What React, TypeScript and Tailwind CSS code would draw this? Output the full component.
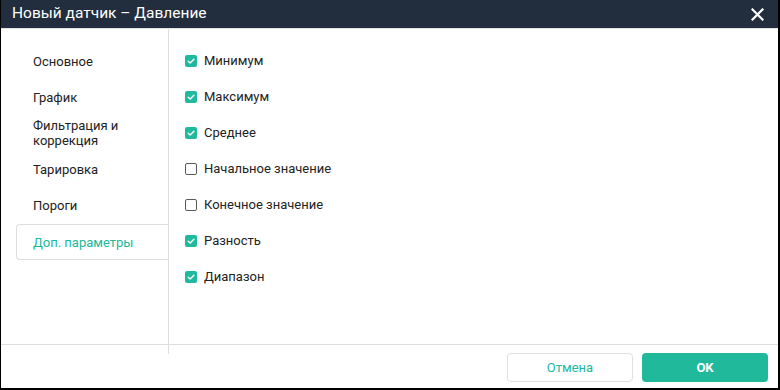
const navItems = ['Основное', 'График', 'Фильтрация и\nкоррекция', 'Тарировка', 'Пороги', 'Доп. параметры']

const options = [
  { label: 'Минимум', checked: true },
  { label: 'Максимум', checked: true },
  { label: 'Среднее', checked: true },
  { label: 'Начальное значение', checked: false },
  { label: 'Конечное значение', checked: false },
  { label: 'Разность', checked: true },
  { label: 'Диапазон', checked: true },
]

function Checkbox({ checked }: { checked: boolean }) {
  if (!checked) {
    return <span className="w-[12px] h-[12px] rounded-[2px] border border-[#5a5a5a] bg-white shrink-0" />
  }
  return (
    <span className="w-[12px] h-[12px] rounded-[2px] bg-[#20b99b] shrink-0 flex items-center justify-center">
      <svg width="10" height="10" viewBox="0 0 10 10" fill="none">
        <path d="M2.2 5.2L4.2 7.1L7.9 3.2" stroke="#fff" strokeWidth="1.4" strokeLinecap="round" strokeLinejoin="round" />
      </svg>
    </span>
  )
}

export default function App() {
  return (
    <div
      className="w-[780px] h-[390px] bg-white border-l border-r-2 border-b-2 border-black flex flex-col text-[#222]"
      style={{ fontFamily: 'Roboto, "Liberation Sans", sans-serif' }}
    >
      {/* Title bar */}
      <div className="h-[29px] bg-[#222e3e] border-b border-[#e3e3e3] flex items-center justify-between pl-[11px] pr-[14px] shrink-0">
        <span className="text-white text-[15.5px] leading-none">Новый датчик – Давление</span>
        <svg width="13" height="13" viewBox="0 0 13 13">
          <path d="M1.5 1.5L11.5 11.5M11.5 1.5L1.5 11.5" stroke="#fff" strokeWidth="2.2" strokeLinecap="square" />
        </svg>
      </div>

      {/* Body */}
      <div className="flex h-[325px] shrink-0">
        <div className="w-[168px] border-r border-[#dedede] flex flex-col shrink-0">
          <div className="flex-1 pt-[14px] pl-[15px]">
            {navItems.map((item, i) => {
              const active = i === navItems.length - 1
              return (
                <div
                  key={item}
                  className={`h-[36px] flex items-center pl-[16px] text-[13px] leading-[15px] whitespace-pre-line ${
                    active ? 'border border-r-0 border-[#dedede] rounded-l-[4px] text-[#20b99b] mt-[1px] h-[35px]' : 'border border-transparent'
                  }`}
                >
                  {item}
                </div>
              )
            })}
          </div>
          <div className="h-[10px] border-t border-[#dedede]" />
        </div>
        <div className="flex-1 flex flex-col">
          <div className="flex-1 pt-[14px] pl-[16px]">
            {options.map((o) => (
              <div key={o.label} className="h-[36px] flex items-center gap-[7px] text-[13px]">
                <Checkbox checked={o.checked} />
                <span>{o.label}</span>
              </div>
            ))}
          </div>
          <div className="h-[10px] border-t border-[#dedede]" />
        </div>
      </div>

      {/* Footer */}
      <div className="flex justify-end gap-[9px] pr-[10px] -mt-px">
        <button className="w-[126px] h-[29px] rounded-[4px] border border-[#e0e0e0] bg-white text-[#20b99b] text-[13px]">
          Отмена
        </button>
        <button className="w-[126px] h-[29px] rounded-[4px] bg-[#20b99b] text-white text-[13px] font-bold">
          OK
        </button>
      </div>
    </div>
  )
}
